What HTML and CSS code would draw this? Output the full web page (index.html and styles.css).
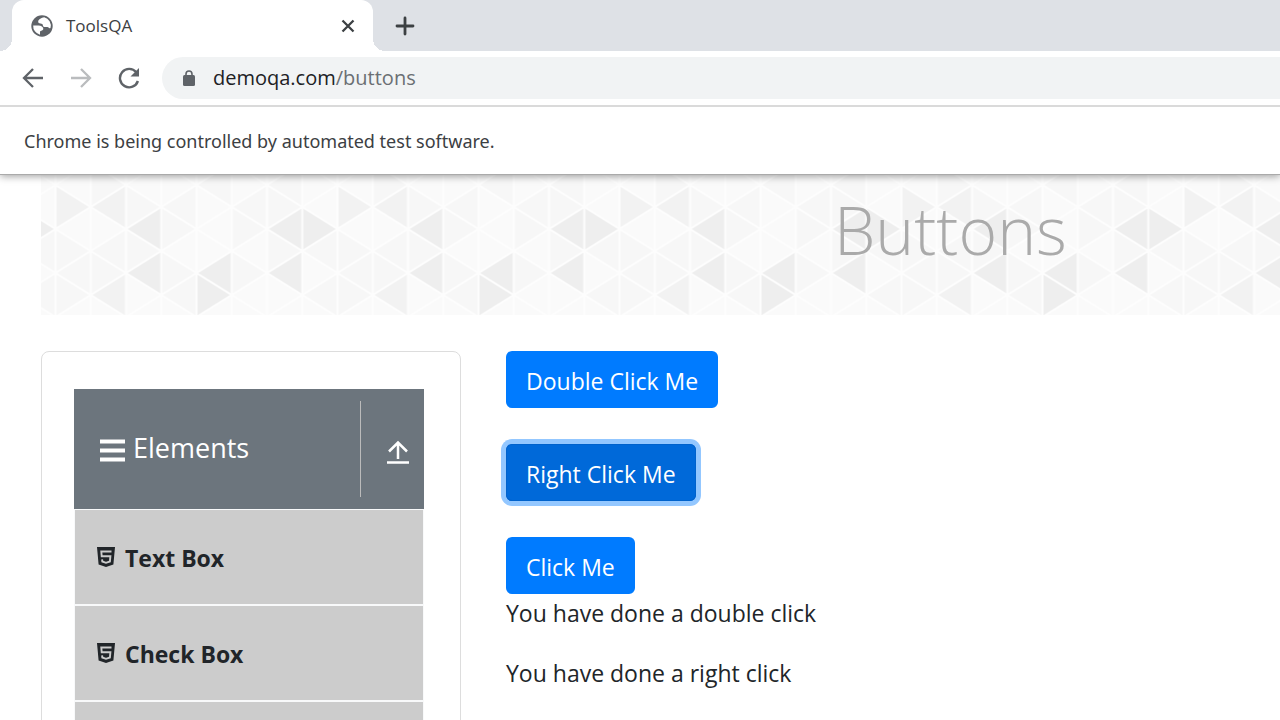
FILE: index.html
```html
<!DOCTYPE html>
<html lang="en">
<head>
<meta charset="utf-8">
<meta name="viewport" content="width=device-width, initial-scale=1">
<title>ToolsQA</title>
<link rel="stylesheet" href="styles.css">
</head>
<body>
<header class="chrome">
  <div class="tabstrip">
    <div class="tab">
      <svg class="tab-icon" viewBox="0 0 22 22" aria-hidden="true">
        <circle cx="11" cy="11" r="10.700" fill="#5f6368"/>
        <path fill="#fff" d="M13.200 2.200C10.500 2.600 7.500 4.500 7.200 6.200c-.2 1.500.8 2.200 2.300 2.300 1.500 0 2.300.7 2.400 1.900.1 1.300 1 1.700 2.500 1.700h2c1.300 0 1.300 1.600 3.100.9A8.800 8.800 0 0 0 13.200 2.200z"/>
        <path fill="#fff" d="M2.200 10.500h5.300c2.700 0 4.800 1.500 4.800 3.300 0 1.200-.9 1.700-2.100 1.900-1 .2-1.200.8-1.200 1.700v2.300A8.800 8.800 0 0 1 2.200 10.500z"/>
      </svg>
      <span class="tab-title">ToolsQA</span>
      <button class="icon-btn tab-close" aria-label="Close tab">
        <svg width="14" height="14" viewBox="0 0 14 14"><path d="M1.500 1.500l11 11M12.500 1.500l-11 11" stroke="#3c4043" stroke-width="2.300" fill="none"/></svg>
      </button>
    </div>
    <button class="icon-btn new-tab" aria-label="New tab">
      <svg width="20" height="20" viewBox="0 0 20 20"><path d="M10 2v16M2 10h16" stroke="#3c4043" stroke-width="2.800" stroke-linecap="round" fill="none"/></svg>
    </button>
  </div>
  <div class="toolbar">
    <button class="icon-btn" aria-label="Back">
      <svg width="22" height="22" viewBox="0 0 22 22"><path d="M21 11H2.500M11 2L2 11l9 9" stroke="#5f6368" stroke-width="2.300" fill="none"/></svg>
    </button>
    <button class="icon-btn" aria-label="Forward" disabled>
      <svg width="22" height="22" viewBox="0 0 22 22"><path d="M1 11h18.500M11 2l9 9-9 9" stroke="#babcbe" stroke-width="2.300" fill="none"/></svg>
    </button>
    <button class="icon-btn" aria-label="Reload">
      <svg width="22" height="22" viewBox="0 0 22 22"><path d="M18.300 5.300A9.200 9.200 0 1 0 19.900 14" stroke="#5f6368" stroke-width="2.400" fill="none"/><path d="M21 1v8.500h-8.500z" fill="#5f6368"/></svg>
    </button>
    <div class="omnibox">
      <svg width="12" height="16" viewBox="0 0 12 16" aria-hidden="true"><rect y="5" width="12" height="11" rx="1.500" fill="#5f6368"/><path d="M3 6V4a3 3 0 0 1 6 0v2" stroke="#5f6368" stroke-width="1.600" fill="none"/></svg>
      <div class="url" role="textbox" aria-label="Address" contenteditable="true" spellcheck="false">demoqa.com<span class="url-path">/buttons</span></div>
    </div>
  </div>
  <p class="infobar">Chrome is being controlled by automated test software.</p>
</header>

<main class="page">
  <div class="banner">
    <svg class="banner-art" aria-hidden="true">
      <defs>
        <polygon id="l" points="35.250,-22 35.250,22 0,0"/>
        <polygon id="r" points="0,-22 0,22 35.250,0"/>
        <pattern id="tri" patternUnits="userSpaceOnUse" x="14.500" y="0" width="282" height="140">
          <rect width="282" height="140" fill="#fafafa"/>
          <g fill="#f7f7f7">
            <use href="#r" x="0" y="76"/><use href="#l" x="35.250" y="76"/><use href="#r" x="70.500" y="32"/>
            <use href="#l" x="105.750" y="32"/><use href="#r" x="70.500" y="76"/><use href="#r" x="105.750" y="54"/>
            <use href="#l" x="176.250" y="32"/><use href="#r" x="176.250" y="54"/><use href="#r" x="211.500" y="32"/>
            <use href="#r" x="211.500" y="76"/><use href="#l" x="246.750" y="76"/><use href="#r" x="176.250" y="98"/>
            <use href="#l" x="105.750" y="120"/><use href="#r" x="0" y="120"/><use href="#r" x="105.750" y="98"/>
            <use href="#l" x="0" y="98"/><use href="#r" x="35.250" y="98"/><use href="#l" x="246.750" y="120"/>
            <use href="#r" x="35.250" y="10"/><use href="#l" x="141" y="10"/><use href="#l" x="211.500" y="10"/>
          </g>
          <g fill="#f2f2f2">
            <use href="#r" x="0" y="32"/><use href="#l" x="35.250" y="32"/><use href="#l" x="35.250" y="120"/>
          </g>
          <g fill="#eeeeee">
            <use href="#l" x="70.500" y="54"/><use href="#l" x="70.500" y="98"/><use href="#l" x="141" y="98"/>
            <use href="#r" x="141" y="120"/><use href="#l" x="211.500" y="54"/><use href="#r" x="246.750" y="54"/>
            <use href="#l" x="211.500" y="98"/>
          </g>
          <g stroke="#fdfdfd" stroke-width="2" fill="none">
            <path d="M0 0V140M35.250 0V140M70.500 0V140M105.750 0V140M141 0V140M176.250 0V140M211.500 0V140M246.750 0V140M282 0V140"/>
            <path d="M0-34L282 142M0 10L282 186M0 54L282 230M0 98L282 274M0-78L282 98M0-122L282 54M0-166L282 10"/>
            <path d="M0 10L282-166M0 54L282-122M0 98L282-78M0 142L282-34M0 186L282 10M0 230L282 54M0 274L282 98"/>
          </g>
        </pattern>
      </defs>
      <rect width="100%" height="100%" fill="url(#tri)"/>
    </svg>
    <h1 class="banner-title">Buttons</h1>
  </div>

  <div class="columns">
    <nav class="sidebar" aria-label="Elements">
      <button class="group-head">
        <svg width="27" height="24" viewBox="0 0 27 24" aria-hidden="true"><path d="M1 2.500h25M1 11.500h25M1 20.500h25" stroke="#fff" stroke-width="4" stroke-linecap="butt"/></svg>
        <span class="group-name">Elements</span>
        <span class="group-toggle">
          <svg width="22" height="24" viewBox="0 0 22 24" aria-hidden="true"><path d="M11 19V2.500M2 11.500L11 2.500l9 9M0 22.500h22" stroke="#fff" stroke-width="2.500" fill="none"/></svg>
        </span>
      </button>
      <ul class="menu">
        <li class="menu-item">
          <svg class="html-icon" viewBox="0 0 18 20" aria-hidden="true"><path fill="#212529" d="M0 0h18l-1.600 17.500L9 20l-7.400-2.500z"/><path d="M14.500 4.500H4.300l.4 4.700h8.700l-.5 5.300L9 15.800l-3.700-1.300-.2-2.200" stroke="#ccc" stroke-width="1.900" fill="none"/></svg>
          <span>Text Box</span>
        </li>
        <li class="menu-item">
          <svg class="html-icon" viewBox="0 0 18 20" aria-hidden="true"><path fill="#212529" d="M0 0h18l-1.600 17.500L9 20l-7.400-2.500z"/><path d="M14.500 4.500H4.300l.4 4.700h8.700l-.5 5.300L9 15.800l-3.700-1.300-.2-2.200" stroke="#ccc" stroke-width="1.900" fill="none"/></svg>
          <span>Check Box</span>
        </li>
        <li class="menu-item"></li>
      </ul>
    </nav>

    <section class="content">
      <div class="actions">
        <button class="btn">Double Click Me</button>
        <button class="btn btn-focus">Right Click Me</button>
        <button class="btn">Click Me</button>
      </div>
      <p class="message">You have done a double click</p>
      <p class="message">You have done a right click</p>
    </section>
  </div>
</main>
</body>
</html>
```
FILE: styles.css
```css
* { box-sizing: border-box; }

body {
  margin: 0;
  height: 100vh;
  display: flex;
  flex-direction: column;
  overflow: hidden;
  background: #fff;
  color: #212529;
  font-family: "Open Sans", "Noto Sans", sans-serif;
  font-size: 23px;
  line-height: 36px;
}

svg { display: block; flex: none; }
button { font: inherit; cursor: pointer; }

.icon-btn {
  display: flex;
  padding: 0;
  border: 0;
  background: none;
}

/* Browser frame */
.chrome {
  position: relative;
  z-index: 1;
  flex: none;
  background: #fff;
  border-bottom: 1px solid #aaa;
  box-shadow: 0 1px 8px rgba(0, 0, 0, 0.4);
}

.tabstrip {
  display: flex;
  align-items: center;
  height: 51px;
  padding-left: 12px;
  background: #dee1e6;
}

.tab {
  position: relative;
  display: flex;
  align-items: center;
  gap: 13px;
  width: 361px;
  height: 51px;
  padding: 0 18px 0 19px;
  border-radius: 12px 12px 0 0;
  background: #fff;
}

.tab::before,
.tab::after {
  content: "";
  position: absolute;
  bottom: 0;
  width: 12px;
  height: 12px;
}
.tab::before { right: 100%; background: radial-gradient(circle at 0 0, transparent 12px, #fff 12px); }
.tab::after { left: 100%; background: radial-gradient(circle at 100% 0, transparent 12px, #fff 12px); }

.tab-icon { width: 22px; height: 22px; }
.tab-title { flex: 1; font-size: 17px; color: #3c4043; }
.new-tab { margin-left: 22px; }

.toolbar {
  display: flex;
  align-items: center;
  gap: 26px;
  height: 54px;
  padding-left: 22px;
}

.omnibox {
  flex: 1;
  display: flex;
  align-items: center;
  gap: 18px;
  height: 42px;
  margin-left: -4px;
  padding-left: 21px;
  border-radius: 21px 0 0 21px;
  background: #f1f3f4;
}

.url { flex: 1; font-size: 20px; color: #202124; outline: 0; }
.url-path { color: #6b6f73; }

.infobar {
  margin: 0;
  padding: 16px 24px 15px;
  border-top: 2px solid #dadada;
  font-family: "Noto Sans", "Open Sans", sans-serif;
  font-size: 18px;
  color: #3c4043;
}

/* Page */
.page { flex: 1; min-height: 0; padding-left: 41px; overflow: hidden; }

.banner { position: relative; height: 140px; padding-left: 64%; }
.banner-art { position: absolute; top: 0; left: 0; width: 100%; height: 100%; }

.banner-title {
  position: relative;
  margin: 0;
  padding-top: 12px;
  font-size: 66px;
  font-weight: 300;
  line-height: 84px;
  color: #aaa;
}

.columns { display: flex; gap: 45px; padding-top: 36px; }

.sidebar {
  flex: none;
  width: 420px;
  padding: 37px 36px 0 32px;
  border: 1px solid #ddd;
  border-radius: 8px;
}

.group-head {
  display: flex;
  align-items: center;
  gap: 7px;
  width: 100%;
  height: 120px;
  padding: 0 0 0 25px;
  border: 0;
  background: #6c757d;
  color: #fff;
  font-size: 27px;
  text-align: left;
}
.group-head > svg { margin-top: 3px; }
.group-name { flex: 1; padding-bottom: 2px; }

.group-toggle {
  display: flex;
  align-items: center;
  justify-content: center;
  width: 64px;
  height: 96px;
  padding: 6px 0 0 10px;
  border-left: 1px solid #bbb;
}

.menu {
  display: grid;
  gap: 2px;
  margin: 0;
  padding: 1px;
  list-style: none;
  background: #f8f9fa;
}

.menu-item {
  display: flex;
  align-items: center;
  gap: 10px;
  height: 94px;
  padding-left: 22px;
  background: #ccc;
  font-weight: 700;
}
.menu-item > span { padding-top: 2px; }
.html-icon { width: 18px; height: 20px; }

.actions { display: grid; justify-items: start; gap: 36px; padding-bottom: 1px; }

.btn {
  height: 57px;
  padding: 2px 20px 0;
  border: 0;
  border-radius: 6px;
  background: #007bff;
  color: #fff;
}

.btn-focus {
  background: #0069d9;
  box-shadow: inset 0 0 0 1px #0062cc, 0 0 0 5px #93c7ff;
}

.message { margin: 0 0 24px; }
```
